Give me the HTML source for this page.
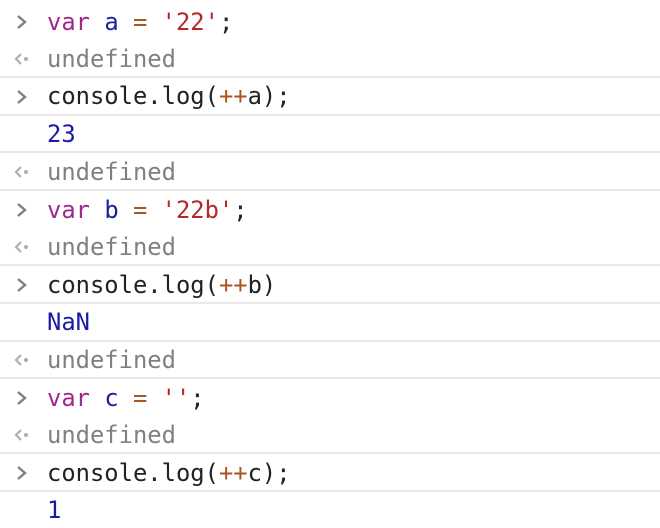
<!DOCTYPE html>
<html><head><style>
body{margin:0;width:660px;height:528px;background:#fff;position:relative;overflow:hidden;font-family:"DejaVu Sans Mono","Liberation Mono",monospace;font-size:23.8px}
.r{position:absolute;left:47px;line-height:30px;white-space:pre;color:#222}
.s{position:absolute;left:0;width:660px;height:2px;background:#e8e8e8}
.k{color:#a0288c}.v{color:#1b1fa0}.o{color:#a8561f}.str{color:#b42828}.u{color:#808080}.n{color:#1a1aa6}
</style></head><body>
<div class="s" style="top:76px"></div>
<div class="s" style="top:114px"></div>
<div class="s" style="top:151px"></div>
<div class="s" style="top:189px"></div>
<div class="s" style="top:264px"></div>
<div class="s" style="top:302px"></div>
<div class="s" style="top:340px"></div>
<div class="s" style="top:377px"></div>
<div class="s" style="top:452px"></div>
<div class="s" style="top:490px"></div>

<svg style="position:absolute;left:0;top:0" width="40" height="528">
<g fill="none" stroke="#808080" stroke-width="2.4">
<path d="M18 16l7 6-7 6"/>
<path d="M18 91l7 6-7 6"/>
<path d="M18 204l7 6-7 6"/>
<path d="M18 279l7 6-7 6"/>
<path d="M18 392l7 6-7 6"/>
<path d="M18 467l7 6-7 6"/>
</g>
<g fill="none" stroke="#b0b0b0" stroke-width="2.2">
<path d="M21 54l-5 5 5 5"/><circle cx="26" cy="59" r="1" fill="#b0b0b0"/>
<path d="M21 167l-5 5 5 5"/><circle cx="26" cy="172" r="1" fill="#b0b0b0"/>
<path d="M21 242l-5 5 5 5"/><circle cx="26" cy="247" r="1" fill="#b0b0b0"/>
<path d="M21 355l-5 5 5 5"/><circle cx="26" cy="360" r="1" fill="#b0b0b0"/>
<path d="M21 430l-5 5 5 5"/><circle cx="26" cy="435" r="1" fill="#b0b0b0"/>
</g>
</svg>

<div class="r" style="top:7px"><span class="k">var</span> <span class="v">a</span> <span class="o">=</span> <span class="str">'22'</span>;</div>
<div class="r u" style="top:44px">undefined</div>
<div class="r" style="top:81px">console.log(<span class="o">++</span>a);</div>
<div class="r n" style="top:119px">23</div>
<div class="r u" style="top:157px">undefined</div>
<div class="r" style="top:195px"><span class="k">var</span> <span class="v">b</span> <span class="o">=</span> <span class="str">'22b'</span>;</div>
<div class="r u" style="top:232px">undefined</div>
<div class="r" style="top:270px">console.log(<span class="o">++</span>b)</div>
<div class="r n" style="top:307px">NaN</div>
<div class="r u" style="top:345px">undefined</div>
<div class="r" style="top:383px"><span class="k">var</span> <span class="v">c</span> <span class="o">=</span> <span class="str">''</span>;</div>
<div class="r u" style="top:420px">undefined</div>
<div class="r" style="top:458px">console.log(<span class="o">++</span>c);</div>
<div class="r n" style="top:495px">1</div>
</body></html>
